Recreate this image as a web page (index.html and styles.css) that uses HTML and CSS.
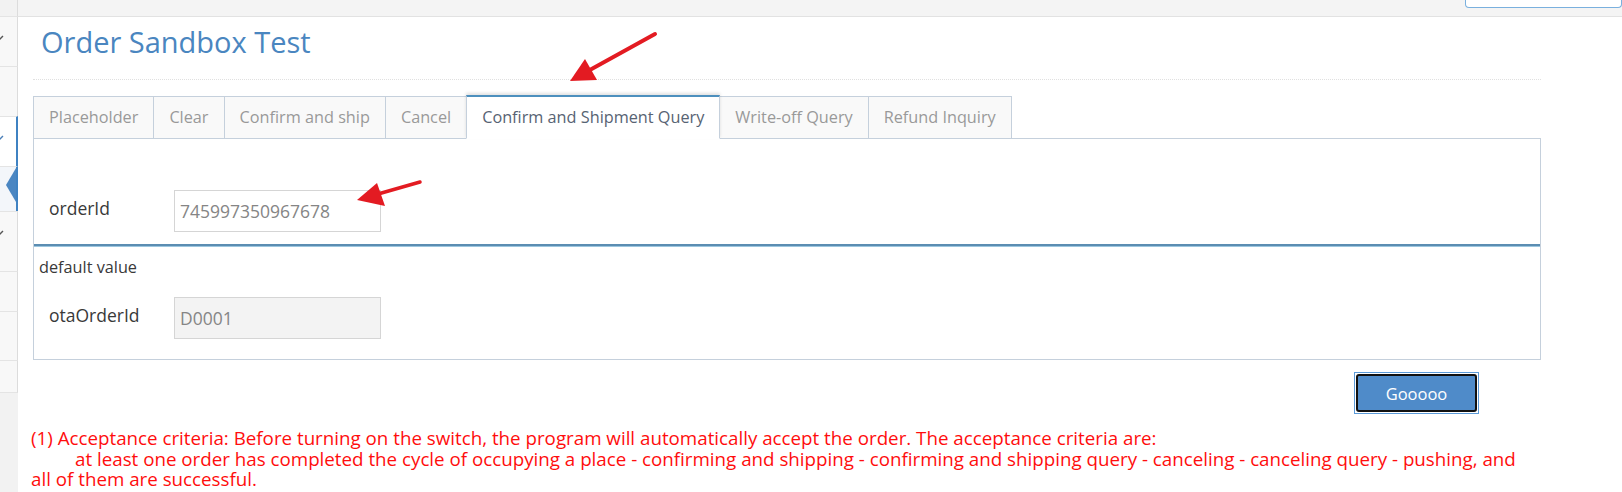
FILE: index.html
```html
<!DOCTYPE html>
<html lang="en">
<head>
<meta charset="utf-8">
<title>Order Sandbox Test</title>
<link rel="stylesheet" href="styles.css">
</head>
<body>
<div class="app">
  <aside class="sidebar">
    <div class="sb-top"></div>
    <div class="sb-item h50"><svg class="chev" width="6" height="8" viewBox="0 0 6 8"><path d="M-3 2 L0 5 L3 2" fill="none" stroke="#555" stroke-width="1.4"/></svg></div>
    <div class="sb-item h50"></div>
    <div class="sb-item h50 active"><svg class="chev" width="6" height="8" viewBox="0 0 6 8"><path d="M-3 2 L0 5 L3 2" fill="none" stroke="#4a7fb8" stroke-width="1.4"/></svg></div>
    <div class="sb-item h45 sub-active"><span class="tri"></span></div>
    <div class="sb-item h60"><svg class="chev" width="6" height="8" viewBox="0 0 6 8"><path d="M-3 2 L0 5 L3 2" fill="none" stroke="#555" stroke-width="1.4"/></svg></div>
    <div class="sb-item h40"></div>
    <div class="sb-item h49"></div>
    <div class="sb-item h33"></div>
  </aside>

  <main class="main">
    <header class="topbar"><div class="search"></div></header>

    <div class="content">
      <div class="page-header">
        <h1>Order Sandbox Test</h1>
      </div>

      <div class="tabbable">
        <ul class="tabs">
          <li class="tab">Placeholder</li>
          <li class="tab">Clear</li>
          <li class="tab">Confirm and ship</li>
          <li class="tab">Cancel</li>
          <li class="tab active">Confirm and Shipment Query</li>
          <li class="tab">Write-off Query</li>
          <li class="tab">Refund Inquiry</li>
        </ul>
        <div class="tab-panel">
          <div class="section section-main">
            <div class="field-row">
              <label class="field-label">orderId</label>
              <input class="field-input" type="text" value="745997350967678">
            </div>
          </div>
          <div class="section section-default">
            <div class="hint">default value</div>
            <div class="field-row">
              <label class="field-label">otaOrderId</label>
              <input class="field-input" type="text" value="D0001" disabled>
            </div>
          </div>
        </div>
      </div>

      <div class="actions">
        <button class="go" type="button"><span class="go-inner">Gooooo</span></button>
      </div>

      <div class="notes">
        <p>(1) Acceptance criteria: Before turning on the switch, the program will automatically accept the order. The acceptance criteria are:</p>
        <p class="indent">at least one order has completed the cycle of occupying a place - confirming and shipping - confirming and shipping query - canceling - canceling query - pushing, and all of them are successful.</p>
        <p class="indent">(2) After the switch is turned on, the orders in the production environment will be pushed to the supplier, so please make sure that the interface is working before turning it on.</p>
      </div>
    </div>
  </main>

  <svg class="annot" width="1622" height="492" viewBox="0 0 1622 492">
    <line x1="655" y1="34" x2="588" y2="71" stroke="#e31b22" stroke-width="4" stroke-linecap="round"/>
    <polygon points="570,81 585,59 597,80" fill="#e31b22"/>
    <line x1="420" y1="182" x2="378" y2="194" stroke="#e31b22" stroke-width="3.5" stroke-linecap="round"/>
    <polygon points="357,200 377,183 385,206" fill="#e31b22"/>
  </svg>
</div>
</body>
</html>
```

FILE: styles.css
```css
* { box-sizing: border-box; }

html, body {
  margin: 0;
  padding: 0;
  background: #fff;
}

body {
  font-family: "Open Sans", "Liberation Sans", sans-serif;
  color: #393939;
}

.app {
  position: relative;
  display: flex;
  width: 1622px;
  height: 492px;
  overflow: hidden;
}

/* ---------- sidebar ---------- */
.sidebar {
  width: 18px;
  flex: 0 0 18px;
  background: #f2f2f2;
  display: flex;
  flex-direction: column;
}

.sb-top {
  height: 16px;
  border-right: 1px solid #dcdcdc;
}

.sb-item {
  position: relative;
  background: #f8f8f8;
  border-top: 1px solid #e4e4e4;
  border-right: 1px solid #dcdcdc;
}

.sb-item:last-child { border-bottom: 1px solid #e4e4e4; }

.h50 { height: 50px; }
.h45 { height: 45px; }
.h60 { height: 60px; }
.h40 { height: 40px; }
.h49 { height: 49px; }
.h33 { height: 33px; }

.sb-item.active {
  background: #fff;
  border-right: 2px solid #3f82c2;
}

.sb-item.sub-active {
  background: #f3f6fa;
  border-right: 2px solid #3f82c2;
}

.chev {
  display: block;
  margin-top: 17px;
}

.tri {
  position: absolute;
  right: 0;
  top: 1px;
  width: 0;
  height: 0;
  border-top: 17px solid transparent;
  border-bottom: 17px solid transparent;
  border-right: 10px solid #4a86c2;
}

/* ---------- main ---------- */
.main {
  flex: 1;
  display: flex;
  flex-direction: column;
  min-width: 0;
}

.topbar {
  height: 17px;
  flex: 0 0 17px;
  background: #f4f4f4;
  border-bottom: 1px solid #e2e2e2;
  display: flex;
  justify-content: flex-end;
  align-items: flex-start;
}

.search {
  width: 157px;
  height: 8px;
  background: #fff;
  border: 1px solid #7ab0de;
  border-top: none;
  border-radius: 0 0 4px 4px;
}

.content {
  padding: 0 81px 0 15px;
}

.page-header {
  margin: 0;
  padding: 5px 0 18px;
  border-bottom: 1px dotted #e0e0e0;
}

.page-header h1 {
  margin: 0 0 0 8px;
  font-size: 29px;
  line-height: 39px;
  font-weight: 400;
  color: #4a86c0;
}

/* ---------- tabs ---------- */
.tabbable {
  margin-top: 15px;
}

.tabs {
  list-style: none;
  margin: 0 0 -1px;
  padding: 0;
  display: flex;
  align-items: flex-end;
  position: relative;
  z-index: 1;
}

.tab {
  height: 43px;
  padding: 0 15px;
  margin-right: -1px;
  border: 1px solid #c5d0dc;
  background: #f9f9f9;
  color: #999;
  font-size: 16.25px;
  line-height: 41px;
  white-space: nowrap;
}

.tab.active {
  height: 44px;
  border-top: 2px solid #4c8fbd;
  border-bottom-color: #fff;
  background: #fff;
  color: #576373;
  position: relative;
  z-index: 2;
  box-shadow: 0 -2px 3px 0 rgba(0, 0, 0, 0.12);
}

.tab-panel {
  border: 1px solid #c5d0dc;
}

.section-main {
  padding: 51px 0 12px;
}

.section-default {
  border-top: 2px solid #5b8db2;
  box-shadow: inset 0 1px 0 #9cc6df;
  padding: 11px 0 20px;
}

.hint {
  padding-left: 5px;
  font-size: 16.25px;
  line-height: 20px;
  color: #393939;
  margin-bottom: 20px;
}

.field-row {
  display: flex;
  align-items: flex-start;
}

.field-label {
  width: 140px;
  padding: 6px 0 0 15px;
  font-size: 17.5px;
  line-height: 24px;
  color: #393939;
}

.field-input {
  width: 207px;
  height: 42px;
  border: 1px solid #d5d5d5;
  border-radius: 0;
  padding: 0 5px;
  font-family: "Open Sans", "Liberation Sans", sans-serif;
  font-size: 17.5px;
  color: #858585;
  background: #fff;
  outline: none;
}

.field-input:disabled {
  background: #f3f3f3;
  color: #858585;
}

/* ---------- actions ---------- */
.actions {
  display: flex;
  justify-content: flex-end;
  padding-right: 62px;
  margin-top: 12px;
}

.go {
  width: 125px;
  height: 42px;
  padding: 1px;
  border: 1px solid #5b9ad8;
  background: #fff;
  cursor: pointer;
}

.go-inner {
  display: flex;
  align-items: center;
  justify-content: center;
  width: 100%;
  height: 100%;
  border: 2px solid #111;
  border-radius: 3px;
  background: #4f8bc9;
  color: #fff;
  font-family: "Open Sans", "Liberation Sans", sans-serif;
  font-size: 16.5px;
}

/* ---------- notes ---------- */
.notes {
  margin: 14px 10px 0 -2px;
  color: #ff0d0d;
  font-size: 18.75px;
  line-height: 20.5px;
}

.notes p {
  margin: 0;
}

.notes .indent {
  text-indent: 44px;
}

/* ---------- annotations ---------- */
.annot {
  position: absolute;
  left: 0;
  top: 0;
  pointer-events: none;
}
```
